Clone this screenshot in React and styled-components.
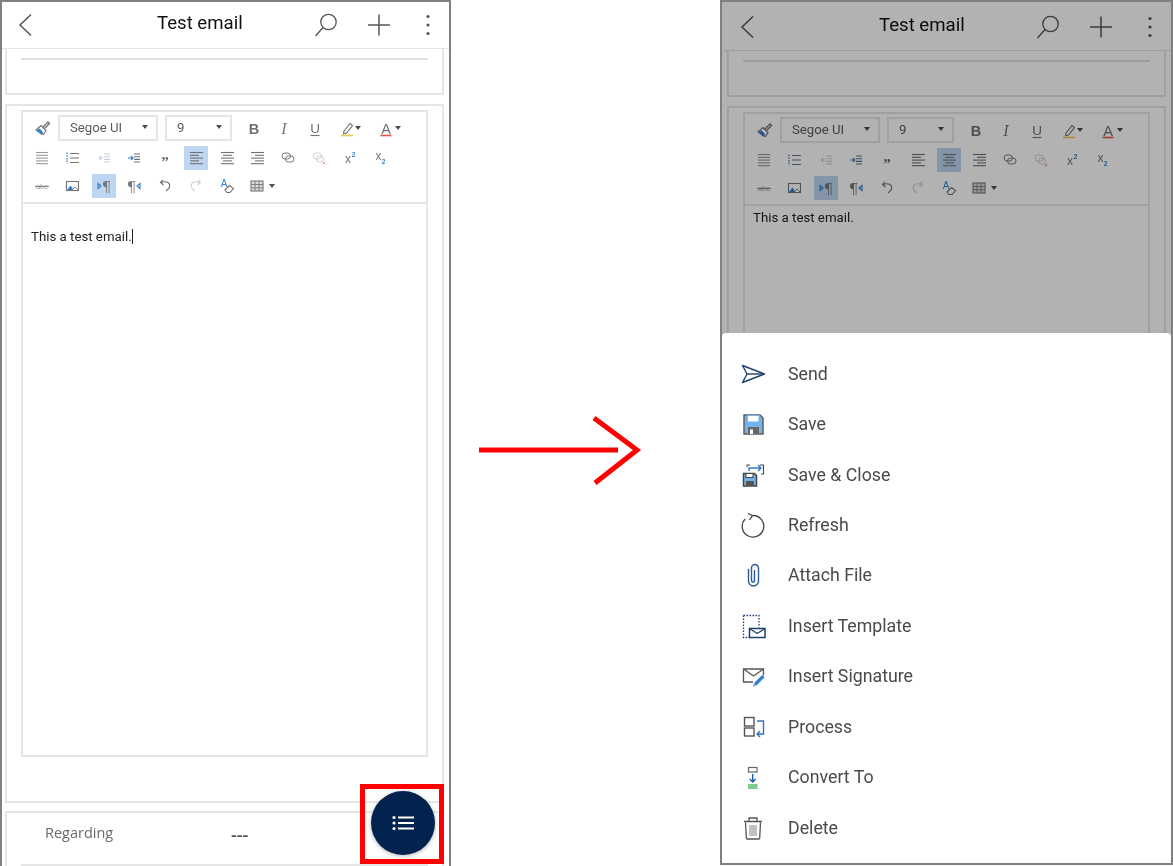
import React from "react";
import styled, { createGlobalStyle } from "styled-components";

const GRAY = "#707070";
const LIGHT = "#cfcfcf";
const BLUE = "#2f7fd0";
const NAVY = "#1f3f70";
const DARK = "#4a4a4a";

const GlobalStyle = createGlobalStyle`
  html, body {
    margin: 0;
    padding: 0;
    background: #fff;
    font-family: Roboto, "Liberation Sans", sans-serif;
  }
`;

const Page = styled.div`
  display: flex;
  width: 1173px;
  height: 866px;
  overflow: hidden;
`;

const Phone = styled.div`
  position: relative;
  flex: none;
  box-sizing: border-box;
  width: ${(p) => (p.$closed ? 453 : 451)}px;
  height: ${(p) => (p.$closed ? 865 : 866)}px;
  padding-top: ${(p) => p.$shift}px;
  padding-left: ${(p) => p.$inset || 0}px;
  overflow: hidden;
  background: #fff;
  border: 2px solid #808080;
  border-bottom: ${(p) => (p.$closed ? "2px solid #808080" : "none")};
`;

const ScreenBody = styled.div`
  filter: blur(0.35px);
`;

const ArrowColumn = styled.div`
  flex: none;
  width: 269px;
  box-sizing: border-box;
  padding: 415px 0 0 28px;
`;

const Header = styled.header`
  display: flex;
  align-items: center;
  height: 47px;
  box-sizing: border-box;
  padding-left: 15px;
  border-bottom: 1px solid #e4e4e4;
`;

const Title = styled.h1`
  margin: 0 0 5px 124px;
  font-size: 18.6px;
  font-weight: 400;
  color: #111;
  white-space: nowrap;
`;

const HeaderActions = styled.div`
  display: flex;
  align-items: center;
  gap: 29px;
  margin-left: auto;
  padding-right: 18px;
`;

const MoreIcon = styled.svg`
  margin-left: 5px;
`;

const Card = styled.section`
  box-sizing: border-box;
  width: 439px;
  margin-left: 3px;
  margin-bottom: ${(p) => p.$gap || 0}px;
  border: 2px solid #e6e6e6;
  border-top-width: ${(p) => (p.$open ? 0 : 2)}px;
`;

const TopCard = styled(Card)`
  height: 46px;
  padding: 9px 14px 0;
`;

const Rule = styled.div`
  height: 2px;
  background: #e0e0e0;
`;

const EditorCard = styled(Card)`
  height: 699px;
  padding: 4px 14px 0;
`;

const Editor = styled.div`
  box-sizing: border-box;
  height: 647px;
  border: 2px solid #e6e6e6;
`;

const Toolbar = styled.div`
  display: flex;
  flex-direction: column;
  gap: 4px;
  height: 92px;
  box-sizing: border-box;
  padding: 3px 0 0 7px;
  border-bottom: 2px solid #e6e6e6;
`;

const ToolRow = styled.div`
  display: flex;
  align-items: center;
  gap: ${(p) => p.$gap ?? 6.75}px;
  margin-bottom: ${(p) => p.$after || 0}px;
`;

const ToolButton = styled.button`
  flex: none;
  display: flex;
  align-items: center;
  justify-content: ${(p) => (p.$pad === undefined ? "center" : "flex-start")};
  box-sizing: border-box;
  width: ${(p) => p.$width || 24}px;
  height: 24px;
  padding: 0 0 0 ${(p) => p.$pad || 0}px;
  border: none;
  background: ${(p) => (p.$active ? "#bfd6f2" : "transparent")};
`;

const SelectBox = styled.div`
  flex: none;
  display: flex;
  align-items: center;
  justify-content: space-between;
  box-sizing: border-box;
  width: ${(p) => p.$width}px;
  height: 26px;
  margin-left: ${(p) => p.$left || 0}px;
  margin-right: ${(p) => p.$right || 0}px;
  padding: 0 8px 2px 10px;
  border: 2px solid #e6e6e6;
  font-size: 13.2px;
  color: #5c5c5c;
`;

const Caret = styled.span`
  flex: none;
  width: 0;
  height: 0;
  margin-left: ${(p) => p.$left || 0}px;
  border-left: 3.5px solid transparent;
  border-right: 3.5px solid transparent;
  border-top: 4px solid #4d4d4d;
`;

const EditorBody = styled.div`
  padding: ${(p) => p.$top}px 0 0 8px;
  font-size: 13.25px;
  line-height: 16px;
  color: #222;
`;

const TextCursor = styled.span`
  display: inline-block;
  width: 1px;
  height: 15px;
  vertical-align: -3px;
  background: #222;
`;

const RegardingCard = styled(Card)`
  height: 70px;
  padding: 0 14px;
`;

const FieldRow = styled.div`
  display: grid;
  grid-template-columns: 186px 1fr;
  align-items: center;
  box-sizing: border-box;
  height: 53px;
  padding: 0 0 12px 24px;
  border-bottom: 2px solid #e6e6e6;
`;

const FieldLabel = styled.span`
  font-family: "Open Sans", sans-serif;
  font-size: 14.5px;
  color: #6a6a6a;
`;

const FieldValue = styled.span`
  font-family: "Open Sans", sans-serif;
  font-size: 18px;
  font-weight: 600;
  line-height: 20px;
  color: #555;
  padding-top: 3px;
`;

const Fab = styled.button`
  position: absolute;
  top: 789px;
  left: 369px;
  display: flex;
  align-items: center;
  justify-content: center;
  width: 64px;
  height: 64px;
  padding: 0 0 0 1px;
  border: none;
  border-radius: 50%;
  background: #03234f;
  box-shadow: 0 1px 4px rgba(0, 0, 0, 0.3);
`;

const Highlight = styled.div`
  position: absolute;
  top: 782px;
  left: 358px;
  box-sizing: border-box;
  width: 84px;
  height: 80px;
  border: 5px solid #f00;
`;

const Dim = styled.div`
  position: absolute;
  inset: 0;
  background: rgba(0, 0, 0, 0.3);
`;

const Sheet = styled.nav`
  position: absolute;
  top: 331px;
  left: 0;
  right: 0;
  bottom: 0;
  box-sizing: border-box;
  padding-top: 15.5px;
  background: #fff;
  border-radius: 4px 4px 0 0;
`;

const SheetItem = styled.div`
  display: flex;
  align-items: center;
  gap: 22px;
  height: 50.45px;
  padding-left: 18px;
  font-size: 17.75px;
  color: ${DARK};
  filter: blur(0.3px);
`;

const Svg = ({ size = 24, children }) => (
  <svg width={size} height={size} viewBox={`0 0 ${size} ${size}`} fill="none">
    {children}
  </svg>
);

const Lines = ({ rows, color = GRAY }) => (
  <Svg>
    {rows.map(([x1, x2], i) => (
      <path key={i} d={`M${x1} ${6.5 + i * 2.8}H${x2}`} stroke={color} strokeWidth="1.1" />
    ))}
  </Svg>
);

const toolIcons = {
  brush: (
    <Svg>
      <path d="M13 11l5-5 1.5 1.5-5 5" stroke={GRAY} strokeWidth="1.4" />
      <path d="M11 9.5l5 5-2.5 4-7.5-4.5z" fill="#fff" stroke={GRAY} strokeWidth="1.1" />
      <path d="M6.5 14.5l3-2 3.5 3.5-1.5 3z" fill={BLUE} />
    </Svg>
  ),
  bold: (
    <Svg>
      <text x="12" y="18" textAnchor="middle" fontFamily="Liberation Sans" fontWeight="700" fontSize="14.5" fill="#707070">B</text>
    </Svg>
  ),
  italic: (
    <Svg>
      <text x="12" y="18" textAnchor="middle" fontFamily="Liberation Serif" fontStyle="italic" fontSize="16" fill="#777">I</text>
    </Svg>
  ),
  underline: (
    <Svg>
      <text x="12" y="16.5" textAnchor="middle" fontFamily="Liberation Sans" fontSize="13.5" fill="#707070">U</text>
      <path d="M7.5 19.5h9" stroke="#707070" strokeWidth="1.1" />
    </Svg>
  ),
  marker: (
    <Svg>
      <path d="M8 15l6-7.5 2.5 2-6 7.5-3 .8z" fill="#fff" stroke={GRAY} strokeWidth="1.1" />
      <path d="M5 19.5h12" stroke="#f2c94c" strokeWidth="1.6" />
    </Svg>
  ),
  fontColor: (
    <Svg>
      <text x="12" y="17.5" textAnchor="middle" fontFamily="Liberation Sans" fontSize="14.5" fill="#707070">A</text>
      <path d="M6.5 19.5h11" stroke="#e0533d" strokeWidth="1.6" />
    </Svg>
  ),
  bullets: <Lines rows={[[6, 18], [6, 18], [6, 18], [6, 18], [6, 18]]} color="#999" />,
  numbers: (
    <Svg>
      <path d="M6 6.5v11" stroke={BLUE} strokeWidth="1.3" strokeDasharray="1.5 1.2" />
      <path d="M9 7.5h9M9 12h9M9 16.5h9" stroke={GRAY} strokeWidth="1.1" />
    </Svg>
  ),
  outdent: (
    <Svg>
      <path d="M7 12h4M9 10l-2 2 2 2" stroke="#a9c7e8" strokeWidth="1" />
      <path d="M12 8h6M12 10.7h6M12 13.4h6M12 16h6" stroke={LIGHT} strokeWidth="1.1" />
    </Svg>
  ),
  indent: (
    <Svg>
      <path d="M6 12h5M9 10l2 2-2 2" stroke={BLUE} strokeWidth="1.1" />
      <path d="M12 8h6M12 10.7h6M12 13.4h6M12 16h6" stroke={GRAY} strokeWidth="1.1" />
    </Svg>
  ),
  quote: (
    <Svg>
      <text x="12" y="20.5" textAnchor="middle" fontFamily="Liberation Serif" fontWeight="700" fontSize="15" fill="#666">”</text>
    </Svg>
  ),
  alignLeft: <Lines rows={[[6, 19], [6, 15], [6, 19], [6, 15], [6, 19]]} />,
  alignCenter: <Lines rows={[[6, 19], [8, 17], [6, 19], [8, 17], [6, 19]]} />,
  alignRight: <Lines rows={[[6, 19], [10, 19], [6, 19], [10, 19], [6, 19]]} />,
  link: (
    <Svg>
      <rect x="6" y="7" width="8.5" height="6" rx="3" stroke="#7a7a7a" strokeWidth="1" />
      <rect x="9.5" y="10" width="8.5" height="6" rx="3" stroke="#7a7a7a" strokeWidth="1" />
    </Svg>
  ),
  unlink: (
    <Svg>
      <rect x="6" y="7" width="8.5" height="6" rx="3" stroke={LIGHT} strokeWidth="1" />
      <rect x="9.5" y="10" width="7" height="6" rx="3" stroke={LIGHT} strokeWidth="1" />
      <path d="M15.5 15.5l3 3M18.5 15.5l-3 3" stroke="#eda99e" strokeWidth="1" />
    </Svg>
  ),
  sup: (
    <Svg>
      <text x="10" y="17" textAnchor="middle" fontFamily="Liberation Sans" fontSize="12" fill="#777">x</text>
      <text x="15.5" y="11" textAnchor="middle" fontFamily="Liberation Sans" fontWeight="700" fontSize="6.5" fill={BLUE}>2</text>
    </Svg>
  ),
  sub: (
    <Svg>
      <text x="10.5" y="14" textAnchor="middle" fontFamily="Liberation Sans" fontSize="12" fill="#777">x</text>
      <text x="15.5" y="18" textAnchor="middle" fontFamily="Liberation Sans" fontWeight="700" fontSize="6.5" fill={BLUE}>2</text>
    </Svg>
  ),
  strike: (
    <Svg>
      <text x="12" y="15" textAnchor="middle" fontFamily="Liberation Sans" fontSize="7.5" fill="#999">abc</text>
      <path d="M5 12.5h14" stroke="#888" strokeWidth="1" />
    </Svg>
  ),
  image: (
    <Svg>
      <rect x="5.5" y="7.5" width="12" height="9" fill="#fff" stroke="#777" strokeWidth="1.1" />
      <path d="M6 16l3.5-4.5 3 4.5z" fill={BLUE} />
      <path d="M11 16l3-3 3 3" stroke="#888" strokeWidth="1" />
    </Svg>
  ),
  ltr: (
    <Svg>
      <path d="M6 9.5l3 2.5-3 2.5z" stroke={BLUE} strokeWidth="1.1" />
      <text x="14.5" y="18" textAnchor="middle" fontFamily="DejaVu Serif" fontSize="15" fill="#777">¶</text>
    </Svg>
  ),
  rtl: (
    <Svg>
      <text x="9.5" y="18" textAnchor="middle" fontFamily="DejaVu Serif" fontSize="15" fill="#777">¶</text>
      <path d="M18 9.5l-3 2.5 3 2.5z" stroke={BLUE} strokeWidth="1.1" />
    </Svg>
  ),
  undo: (
    <Svg>
      <path d="M8 8.5c5-2 9.5 0 8.5 4.5-.5 2-2 3-3.5 4" stroke={GRAY} strokeWidth="1.1" />
      <path d="M10 6L7.5 8.5 10.5 11" stroke={GRAY} strokeWidth="1.1" />
    </Svg>
  ),
  redo: (
    <Svg>
      <path d="M16 8.5c-5-2-9.5 0-8.5 4.5.5 2 2 3 3.5 4" stroke={LIGHT} strokeWidth="1.1" />
      <path d="M14 6l2.5 2.5L13.5 11" stroke={LIGHT} strokeWidth="1.1" />
    </Svg>
  ),
  clear: (
    <Svg>
      <text x="9" y="13" textAnchor="middle" fontFamily="Liberation Sans" fontSize="10" fill={BLUE}>A</text>
      <path d="M10 16l4.5-4.5 4 3-3.5 4h-3z" fill="#fff" stroke={GRAY} strokeWidth="1.1" />
    </Svg>
  ),
  table: (
    <Svg>
      <rect x="6" y="7" width="12" height="10" fill="#ddd" stroke="#777" strokeWidth="1.1" />
      <path d="M10 7v10M14 7v10M6 10.5h12M6 13.8h12" stroke="#777" strokeWidth="0.9" />
    </Svg>
  ),
};

const menuIcons = {
  send: (
    <Svg size={26}>
      <path d="M2.5 4.5L24.5 13 2.5 21.5 7 13z" stroke={NAVY} strokeWidth="1.4" strokeLinejoin="round" />
      <path d="M7 13h17" stroke={NAVY} strokeWidth="1.4" />
    </Svg>
  ),
  save: (
    <Svg size={26}>
      <path d="M4 4h16l3 3v16H4z" fill="#74b3ec" stroke="#5f5f5f" strokeWidth="1.5" />
      <rect x="7.5" y="4.5" width="11.5" height="6.5" fill="#fff" stroke="#74b3ec" strokeWidth="1" />
      <rect x="8" y="16" width="11" height="7" fill="#666" />
      <rect x="10" y="18.5" width="3" height="4.5" fill="#fff" />
    </Svg>
  ),
  saveClose: (
    <Svg size={26}>
      <path d="M3.5 11.5h11l2 2v10.5h-13z" fill="#74b3ec" stroke="#444" strokeWidth="1.5" />
      <rect x="6" y="11.5" width="7" height="4" fill="#fff" stroke="#444" />
      <rect x="6" y="19" width="8" height="5" fill="#555" />
      <path d="M9 9V6h12M18 3l3 3-3 3" stroke={BLUE} strokeWidth="1.5" />
      <path d="M7 5V3h3M20 3h3.5v9H21" stroke="#444" strokeWidth="1.1" />
    </Svg>
  ),
  refresh: (
    <Svg size={26}>
      <path d="M13 3.5A10.8 10.8 0 1 1 5 7" stroke="#444" strokeWidth="1.3" />
      <path d="M8 1.5L12.5 3.5 9.5 8" stroke="#444" strokeWidth="1.3" />
    </Svg>
  ),
  attach: (
    <Svg size={26}>
      <path d="M8.5 7v12a5 5 0 0 0 10 0V6a3.5 3.5 0 0 0-7 0v12.5a1.5 1.5 0 0 0 3 0V8" stroke="#2b5c9a" strokeWidth="1.4" />
    </Svg>
  ),
  template: (
    <Svg size={26}>
      <path d="M3.5 2.5h15.5v12M3.5 2.5v22h6" stroke={NAVY} strokeWidth="1.3" strokeDasharray="1.6 1.4" />
      <rect x="9.5" y="15.5" width="15.5" height="9" fill="#fff" stroke={NAVY} strokeWidth="1.5" />
      <path d="M9.5 15.5l7.7 5 7.8-5" stroke={NAVY} strokeWidth="1.3" />
    </Svg>
  ),
  signature: (
    <Svg size={26}>
      <path d="M13 19H3.5V6h20v6" stroke="#555" strokeWidth="1.3" />
      <path d="M3.5 6l10 7 10-7" stroke="#555" strokeWidth="1.3" />
      <path d="M23.5 13L15 21.5" stroke={BLUE} strokeWidth="3.2" />
      <path d="M14 21l-1 2.5 2.5-1z" fill={BLUE} />
    </Svg>
  ),
  process: (
    <Svg size={26}>
      <rect x="4.5" y="3.5" width="9.5" height="8.5" stroke="#555" strokeWidth="1.4" />
      <rect x="4.5" y="14" width="9.5" height="8" stroke="#555" strokeWidth="1.4" />
      <path d="M17 7h6.5v13H17M20 17l-3 3 3 3" stroke="#2f73b8" strokeWidth="1.4" />
    </Svg>
  ),
  convert: (
    <Svg size={26}>
      <rect x="8.5" y="3.5" width="8.5" height="4.5" fill="#fff" stroke="#666" strokeWidth="1.2" />
      <path d="M12.7 10v8M9.8 15l2.9 3 2.9-3" stroke="#1f5fa8" strokeWidth="1.4" />
      <rect x="8" y="20" width="9.5" height="5" fill="#7fcb8f" />
    </Svg>
  ),
  trash: (
    <Svg size={26}>
      <path d="M5.5 7.5l.8 15.5a1 1 0 0 0 1 1h11.4a1 1 0 0 0 1-1l.8-15.5" stroke="#555" strokeWidth="1.3" />
      <path d="M4 6.5h18M9 6V3h8v3" stroke="#555" strokeWidth="1.3" />
      <path d="M10 10v11M12 10v11M14 10v11M16 10v11" stroke="#777" strokeWidth="0.9" />
    </Svg>
  ),
};

const menuItems = [
  ["send", "Send"],
  ["save", "Save"],
  ["saveClose", "Save & Close"],
  ["refresh", "Refresh"],
  ["attach", "Attach File"],
  ["template", "Insert Template"],
  ["signature", "Insert Signature"],
  ["process", "Process"],
  ["convert", "Convert To"],
  ["trash", "Delete"],
];

const secondRow = ["bullets", "numbers", "outdent", "indent", "quote", "alignLeft", "alignCenter", "alignRight", "link", "unlink", "sup", "sub"];
const thirdRow = ["strike", "image", "ltr", "rtl", "undo", "redo", "clear"];

const Tool = ({ name, active }) => <ToolButton $active={active}>{toolIcons[name]}</ToolButton>;

const Screen = ({ activeAlign, bodyTop, cursor, showFields }) => (
  <ScreenBody>
    <Header>
      <svg width="16" height="24" viewBox="0 0 16 24" fill="none">
        <path d="M14 1.5L3 12l11 10.5" stroke="#555" strokeWidth="1.5" />
      </svg>
      <Title>Test email</Title>
      <HeaderActions>
        <svg width="24" height="24" viewBox="0 0 24 24" fill="none">
          <circle cx="14.5" cy="9" r="7.7" stroke="#555" strokeWidth="1.3" />
          <path d="M9 14.5L1.5 23" stroke="#555" strokeWidth="1.3" />
        </svg>
        <svg width="24" height="24" viewBox="0 0 24 24" fill="none">
          <path d="M1 12h22M12 1.5v21" stroke="#555" strokeWidth="1.5" />
        </svg>
        <MoreIcon width="6" height="24" viewBox="0 0 6 24" fill="#555">
          <circle cx="3" cy="3.5" r="1.6" />
          <circle cx="3" cy="12" r="1.6" />
          <circle cx="3" cy="20.5" r="1.6" />
        </MoreIcon>
      </HeaderActions>
    </Header>
    <TopCard $open $gap={9}>
      <Rule />
    </TopCard>
    <EditorCard $gap={8}>
      <Editor>
        <Toolbar>
          <ToolRow $gap={0} $after={1}>
            <Tool name="brush" />
            <SelectBox $width={100} $left={4} $right={7}>
              Segoe UI <Caret />
            </SelectBox>
            <SelectBox $width={67} $right={10}>
              9 <Caret />
            </SelectBox>
            <Tool name="bold" />
            <ToolButton $width={36}>{toolIcons.italic}</ToolButton>
            <ToolButton $width={26}>{toolIcons.underline}</ToolButton>
            <ToolButton $width={44} $pad={8}>
              {toolIcons.marker}
              <Caret $left={-5} />
            </ToolButton>
            <ToolButton $width={38} $pad={2}>
              {toolIcons.fontColor}
              <Caret $left={-3} />
            </ToolButton>
          </ToolRow>
          <ToolRow>
            {secondRow.map((name) => (
              <Tool key={name} name={name} active={name === activeAlign} />
            ))}
          </ToolRow>
          <ToolRow>
            {thirdRow.map((name) => (
              <Tool key={name} name={name} active={name === "ltr"} />
            ))}
            <ToolButton $width={36} $pad={0}>
              {toolIcons.table}
              <Caret />
            </ToolButton>
          </ToolRow>
        </Toolbar>
        <EditorBody $top={bodyTop}>
          This a test email.{cursor && <TextCursor />}
        </EditorBody>
      </Editor>
    </EditorCard>
    {showFields && (
      <RegardingCard>
        <FieldRow>
          <FieldLabel>Regarding</FieldLabel>
          <FieldValue>---</FieldValue>
        </FieldRow>
      </RegardingCard>
    )}
  </ScreenBody>
);

export default function App() {
  return (
    <>
      <GlobalStyle />
      <Page>
        <Phone $shift={0}>
          <Screen activeAlign="alignLeft" bodyTop={25} cursor showFields />
          <Fab>
            <svg width="24" height="16" viewBox="0 0 24 16" fill="#fff">
              <circle cx="2" cy="2.5" r="1.6" />
              <circle cx="2" cy="8" r="1.6" />
              <circle cx="2" cy="13.5" r="1.6" />
              <rect x="6" y="1.5" width="16" height="2" />
              <rect x="6" y="7" width="16" height="2" />
              <rect x="6" y="12.5" width="16" height="2" />
            </svg>
          </Fab>
          <Highlight />
        </Phone>
        <ArrowColumn>
          <svg width="164" height="72" viewBox="0 0 164 72" fill="none">
            <path d="M0 35h139" stroke="#f00" strokeWidth="5" />
            <path d="M115 3l43 32-42 33" stroke="#f00" strokeWidth="5" />
          </svg>
        </ArrowColumn>
        <Phone $shift={2} $inset={2} $closed>
          <Screen activeAlign="alignCenter" bodyTop={4} />
          <Dim />
          <Sheet>
            {menuItems.map(([icon, label]) => (
              <SheetItem key={icon}>
                {menuIcons[icon]}
                {label}
              </SheetItem>
            ))}
          </Sheet>
        </Phone>
      </Page>
    </>
  );
}
